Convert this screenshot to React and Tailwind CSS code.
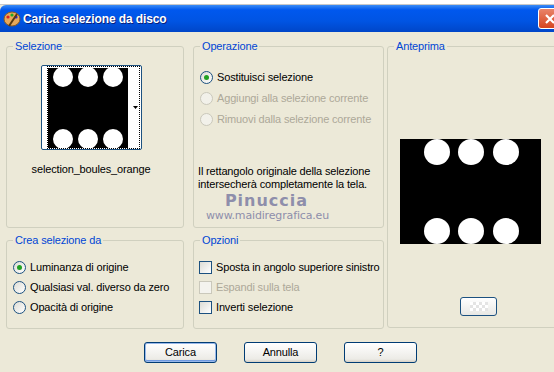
import React from "react";

const font = { fontFamily: '"Liberation Sans", Arial, sans-serif' };

function Group({ title, className, children }) {
  return (
    <div className={`relative border border-[#d0d0bf] rounded-[3px] ${className}`}>
      <span className="absolute -top-[7px] left-[6px] bg-[#ece9d8] px-[2px] text-[11px] leading-[13px] text-[#0046d5]">
        {title}
      </span>
      {children}
    </div>
  );
}

function Radio({ checked, disabled, label }) {
  return (
    <div className="flex items-center gap-[4px] h-[20px] whitespace-nowrap">
      <span
        className={`w-[13px] h-[13px] rounded-full border flex items-center justify-center ${
          disabled ? "border-[#cac8bb] bg-[#f2f1ea]" : "border-[#1c5180] bg-[linear-gradient(135deg,#dcdcd5,#ffffff)]"
        }`}
      >
        {checked && <span className="w-[5px] h-[5px] rounded-full bg-[#21a121]" />}
      </span>
      <span className={disabled ? "text-[#aca899]" : "text-black"}>{label}</span>
    </div>
  );
}

function Check({ disabled, label }) {
  return (
    <div className="flex items-center gap-[4px] h-[20px] whitespace-nowrap">
      <span
        className={`w-[13px] h-[13px] border ${
          disabled ? "border-[#cac8bb] bg-[#f4f3ee]" : "border-[#1c5180] bg-[linear-gradient(135deg,#dcdcd5,#ffffff)]"
        }`}
      />
      <span className={disabled ? "text-[#aca899]" : "text-black"}>{label}</span>
    </div>
  );
}

function Button({ children, def }) {
  return (
    <button
      className={`w-[73px] h-[21px] rounded-[3px] border border-[#003c74] text-[11px] text-black bg-[linear-gradient(#ffffff,#ecebe6_85%,#d6d0c5)] ${
        def ? "shadow-[inset_0_0_0_1px_#98b8ea,inset_0_-1px_0_1px_#6f9ae0]" : ""
      }`}
    >
      {children}
    </button>
  );
}

function Thumb() {
  return (
    <svg width="80" height="80" viewBox="0 0 80 80">
      <rect width="80" height="80" fill="#000" />
      {[15, 40, 65].map((x) => (
        <g key={x}>
          <circle cx={x} cy="9" r="10" fill="#fff" />
          <circle cx={x} cy="71" r="10" fill="#fff" />
        </g>
      ))}
    </svg>
  );
}

function Preview() {
  return (
    <svg width="141" height="105" viewBox="0 0 141 105">
      <rect width="141" height="105" fill="#000" />
      {[37, 71, 106].map((x) => (
        <g key={x}>
          <circle cx={x} cy="13" r="13" fill="#fff" />
          <circle cx={x} cy="92" r="13" fill="#fff" />
        </g>
      ))}
    </svg>
  );
}

export default function App() {
  return (
    <div className="w-[554px] h-[372px] overflow-hidden bg-[#ece9d8] text-[11px] tracking-[-0.15px]" style={font}>
      {/* strip of the window behind */}
      <div className="h-[5px] bg-white border-b border-[#c8c8c8]" />

      {/* title bar */}
      <div className="h-[27px] flex items-center bg-[linear-gradient(#3b8cf5,#0058ee_18%,#0054e3_60%,#0046c8)] rounded-tl-[6px]">
        <svg width="18" height="18" viewBox="0 0 18 18" className="ml-[3px]">
          <ellipse cx="9" cy="9" rx="8" ry="7" fill="#e8a85a" stroke="#8a5a20" />
          <circle cx="5" cy="7" r="1.6" fill="#d22" />
          <circle cx="9" cy="5" r="1.6" fill="#2a2" />
          <circle cx="13" cy="7" r="1.6" fill="#22d" />
          <path d="M6 16 L14 4" stroke="#5a3a10" strokeWidth="2" />
        </svg>
        <span
          className="ml-[2px] text-white font-bold text-[12px] tracking-[-0.1px]"
          style={{ textShadow: "1px 1px #0a1f7a" }}
        >
          Carica selezione da disco
        </span>
        <div className="ml-auto mr-[-8px] w-[24px] h-[21px] rounded-[3px] border border-white bg-[linear-gradient(#e9846a,#d6441f)] flex items-center justify-center">
          <svg width="12" height="12" viewBox="0 0 12 12">
            <path d="M2 2 L10 10 M10 2 L2 10" stroke="#fff" strokeWidth="2.2" />
          </svg>
        </div>
      </div>

      {/* body */}
      <div className="flex h-[340px]">
        <div className="w-[3px] bg-[#0a55e6]" />
        <div className="flex-1 flex flex-col">
          <div className="flex pt-[14px] pl-[6px] gap-[3px]">
            <div className="flex flex-col gap-[12px]">
              <div className="flex gap-[9px]">
                <Group title="Selezione" className="w-[178px] h-[182px]">
                  <div className="flex flex-col items-center pt-[18px] pr-[8px]">
                    <div className="w-[101px] h-[85px] border border-[#1c5180] rounded-[2px] bg-white flex items-center pl-[6px] pr-[2px]">
                      <div className="flex-1 h-[81px] outline outline-1 outline-dotted outline-black flex items-center">
                        <Thumb />
                        <div className="flex-1 flex justify-end pr-[1px]">
                          <svg width="5" height="3" viewBox="0 0 5 3">
                            <path d="M0 0 H5 L2.5 3 Z" fill="#000" />
                          </svg>
                        </div>
                      </div>
                    </div>
                    <div className="mt-[11px]">selection_boules_orange</div>
                  </div>
                </Group>
                <Group title="Operazione" className="w-[191px] h-[182px]">
                  <div className="pl-[6px] pt-[20px] flex flex-col gap-[1px]">
                    <Radio checked label="Sostituisci selezione" />
                    <Radio disabled label="Aggiungi alla selezione corrente" />
                    <Radio disabled label="Rimuovi dalla selezione corrente" />
                  </div>
                  <div className="pl-[4px] pt-[36px] leading-[13px] whitespace-nowrap">
                    <div>Il rettangolo originale della selezione</div>
                    <div>intersecherà completamente la tela.</div>
                  </div>
                  <div className="flex flex-col items-center pr-[44px] leading-none text-[#8e8eab]">
                    <span
                      className="text-[16px] font-bold tracking-[1px] mt-[2px]"
                      style={{ fontFamily: '"DejaVu Sans", sans-serif' }}
                    >
                      Pinuccia
                    </span>
                    <span className="text-[11px] mt-[1px] ml-[2px]" style={{ fontFamily: '"DejaVu Sans", sans-serif' }}>
                      www.maidiregrafica.eu
                    </span>
                  </div>
                </Group>
              </div>
              <div className="flex gap-[9px]">
                <Group title="Crea selezione da" className="w-[178px] h-[89px]">
                  <div className="pl-[6px] pt-[16px] flex flex-col">
                    <Radio checked label="Luminanza di origine" />
                    <Radio label="Qualsiasi val. diverso da zero" />
                    <Radio label="Opacità di origine" />
                  </div>
                </Group>
                <Group title="Opzioni" className="w-[191px] h-[89px]">
                  <div className="pl-[5px] pt-[16px] flex flex-col">
                    <Check label="Sposta in angolo superiore sinistro" />
                    <Check disabled label="Espandi sulla tela" />
                    <Check label="Inverti selezione" />
                  </div>
                </Group>
              </div>
            </div>
            <Group title="Anteprima" className="w-[180px] h-[282px]">
              <div className="flex flex-col pl-[12px] pt-[92px]">
                <Preview />
                <div className="mt-[53px] ml-[60px] w-[37px] h-[19px] rounded-[3px] border border-[#1c5180] bg-[linear-gradient(#ffffff,#e8e8e4)] flex items-center justify-center">
                  <div className="w-[18px] h-[9px] bg-[repeating-conic-gradient(#e4e4e4_0_25%,#ffffff_0_50%)] bg-[length:6px_6px]" />
                </div>
              </div>
            </Group>
          </div>
          <div className="flex pl-[144px] gap-[27px] mt-[13px]">
            <Button def>Carica</Button>
            <Button>Annulla</Button>
            <Button>?</Button>
          </div>
        </div>
      </div>
    </div>
  );
}
